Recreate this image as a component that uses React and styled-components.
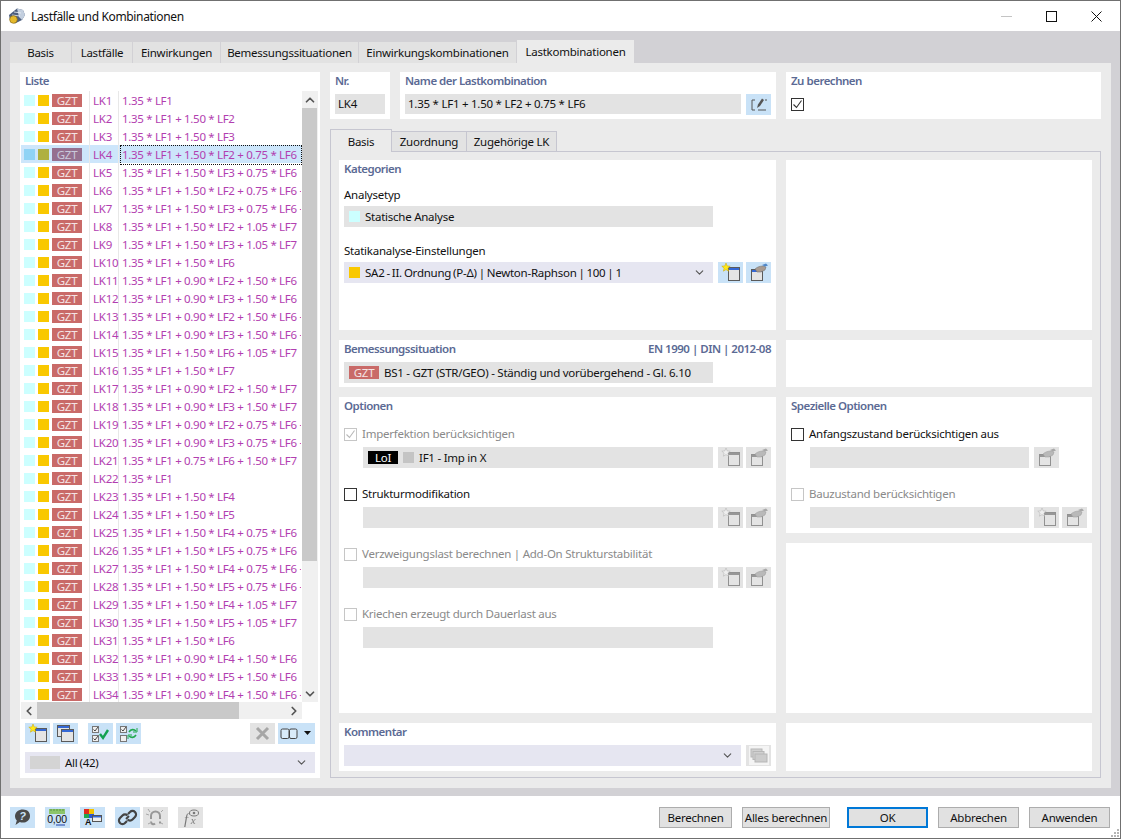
import React from "react";
import styled, { createGlobalStyle } from "styled-components";
import { ChevronDown, ChevronUp, ChevronLeft, ChevronRight } from "lucide-react";

const GlobalStyle = createGlobalStyle`
  html, body { margin: 0; padding: 0; background: #fff; }
  * { box-sizing: border-box; }
  body { font-family: "Noto Sans", "Open Sans", sans-serif; font-size: 11.5px; color: #111; }
`;

const Win = styled.div`
  width: 1121px;
  height: 839px;
  border: 1px solid #707070;
  display: flex;
  flex-direction: column;
  background: #fff;
  overflow: hidden;
  letter-spacing: -0.25px;
`;
const TitleBar = styled.div`
  height: 30px;
  flex: none;
  display: flex;
  align-items: center;
  padding-left: 7px;
  gap: 5px;
`;
const TitleText = styled.span`
  flex: 1;
  font-size: 12px;
  letter-spacing: -0.35px;
`;
const WinButtons = styled.div`
  display: flex;
  align-items: center;
  margin-right: 18px;
  gap: 34px;
`;
const Band = styled.div`
  flex: none;
  height: 765px;
  background: #d2d1d5;
  padding: 9px 9px 8px;
`;
const TopTabs = styled.div`
  height: 23px;
  display: flex;
  align-items: flex-end;
  gap: 1px;
`;
const TopTab = styled.div`
  width: ${(p) => p.$w}px;
  height: ${(p) => (p.$active ? 23 : 21)}px;
  background: ${(p) => (p.$active ? "#ebebeb" : "#e2e2e2")};
  display: flex;
  align-items: center;
  justify-content: center;
`;
const Sheet = styled.div`
  height: 725px;
  background: #ebebeb;
  padding: 9px 10px 10px;
  display: grid;
  grid-template-columns: 300px 771px;
  gap: 10px;
`;
const ListPanel = styled.div`
  background: #fff;
  display: flex;
  flex-direction: column;
`;
const Heading = styled.div`
  height: 16px;
  line-height: 16px;
  font-weight: 600;
  color: #5b6a94;
  letter-spacing: -0.5px;
  display: flex;
  justify-content: space-between;
`;
const ListHeading = styled(Heading)`
  margin: 1px 0 2px 5px;
`;
const ListWrap = styled.div`
  margin: 0 1px;
  height: 611px;
  display: flex;
  overflow: hidden;
`;
const Rows = styled.div`
  width: 281px;
  flex: none;
  overflow: hidden;
`;
const Row = styled.div`
  height: 18px;
  display: grid;
  grid-template-columns: 69px 29px 1fr;
  align-items: stretch;
  background: ${(p) => (p.$sel ? "#cde6fb" : "transparent")};
`;
const Marks = styled.div`
  display: flex;
  align-items: center;
  padding: 0 0 1px 3px;
  gap: 3px;
  border-right: 1px solid #e8e8e8;
`;
const Swatch = styled.span`
  width: 11px;
  height: 11px;
  flex: none;
  background: ${(p) => p.$c};
`;
const Gzt = styled.span`
  width: 30px;
  height: 13px;
  flex: none;
  background: ${(p) => p.$c || "#c96a68"};
  color: ${(p) => (p.$sel ? "#c9c9dc" : "#f4e4e4")};
  display: flex;
  align-items: center;
  justify-content: center;
`;
const Code = styled.span`
  color: #b23eb0;
  padding-left: 3px;
  line-height: 20px;
  border-right: 1px solid #e8e8e8;
  white-space: nowrap;
`;
const Formula = styled.span`
  color: #b23eb0;
  padding-left: 1px;
  line-height: 18px;
  letter-spacing: -0.32px;
  white-space: nowrap;
  overflow: hidden;
  border: 1px ${(p) => (p.$sel ? "dotted #111" : "solid transparent")};
  margin-left: 1px;
`;
const VBar = styled.div`
  width: 16px;
  flex: none;
  background: #f0f0f0;
  display: flex;
  flex-direction: column;
`;
const Arrow = styled.div`
  width: 16px;
  height: 17px;
  flex: none;
  display: flex;
  align-items: center;
  justify-content: center;
  color: #555;
`;
const VThumb = styled.div`
  width: 15px;
  height: 453px;
  background: #c9c9c9;
`;
const Spring = styled.div`
  flex: 1;
`;
const HBar = styled.div`
  margin-left: 1px;
  width: 281px;
  height: 17px;
  flex: none;
  background: #f0f0f0;
  display: flex;
  align-items: center;
`;
const HThumb = styled.div`
  width: 202px;
  height: 17px;
  background: #c9c9c9;
`;
const ListTools = styled.div`
  margin: 4px 5px 0;
  height: 21px;
  display: flex;
  gap: 3px;
`;
const Pad = styled.div`
  width: ${(p) => p.$w}px;
  flex: none;
`;
const IconBtn = styled.div`
  width: ${(p) => p.$w || 25}px;
  height: 21px;
  flex: none;
  background: ${(p) => (p.$off ? "#e3e3e3" : "#c9e2f7")};
  display: flex;
  align-items: center;
  justify-content: center;
  svg { filter: ${(p) => (p.$off ? "grayscale(1) opacity(0.6)" : "none")}; }
`;
const Combo = styled.div`
  width: ${(p) => p.$w}px;
  height: 21px;
  flex: none;
  background: #e6e6f1;
  display: flex;
  align-items: center;
  padding: 0 7px 1px 5px;
  gap: 5px;
  color: #111;
  word-spacing: -0.8px;
`;
const ListCombo = styled(Combo)`
  margin: 8px 5px 0;
`;
const Fill = styled.span`
  flex: 1;
  white-space: nowrap;
`;
const AllSwatch = styled.span`
  width: 30px;
  height: 13px;
  background: #d4d4d4;
`;
const Right = styled.div`
  display: flex;
  flex-direction: column;
  min-width: 0;
`;
const HeadRow = styled.div`
  height: 47px;
  display: grid;
  grid-template-columns: 60px 376px 315px;
  gap: 10px;
`;
const HeadBox = styled.div`
  background: #fff;
  padding: 1px 5px 0;
`;
const FieldRow = styled.div`
  display: flex;
  gap: 5px;
  margin-top: ${(p) => p.$top ?? 5}px;
  margin-left: ${(p) => p.$indent || 0}px;
`;
const Field = styled.div`
  width: ${(p) => p.$w}px;
  height: ${(p) => p.$h || 21}px;
  flex: none;
  background: #e3e3e3;
  display: flex;
  align-items: center;
  padding: 0 0 1px ${(p) => p.$pad ?? 5}px;
  gap: 5px;
  white-space: nowrap;
`;
const Tools = styled.div`
  display: flex;
  gap: 3px;
`;
const SubTabs = styled.div`
  margin-top: 10px;
  height: 23px;
  display: flex;
  align-items: flex-end;
  position: relative;
  z-index: 1;
  margin-bottom: -1px;
`;
const SubTab = styled.div`
  width: ${(p) => p.$w}px;
  height: ${(p) => (p.$active ? 23 : 21)}px;
  background: ${(p) => (p.$active ? "#ebebeb" : "#e3e3e3")};
  border: 1px solid #c6c6d0;
  border-bottom: ${(p) => (p.$active ? "none" : "1px solid #c6c6d0")};
  margin-left: ${(p) => (p.$first ? 0 : -1)}px;
  display: flex;
  align-items: center;
  justify-content: center;
`;
const SubSheet = styled.div`
  flex: 1;
  border: 1px solid #c6c6d0;
  padding: 8px 8px 6px;
  display: grid;
  grid-template-columns: 437px 306px;
  grid-template-rows: 170px 47px 316px 48px;
  gap: 10px;
`;
const Section = styled.div`
  background: #fff;
  padding: 1px 5px 0;
`;
const Stack = styled.div`
  display: flex;
  flex-direction: column;
  gap: 10px;
  min-height: 0;
`;
const StackSection = styled(Section)`
  flex: ${(p) => (p.$h ? `0 0 ${p.$h}px` : 1)};
`;
const Label = styled.div`
  height: 16px;
  line-height: 16px;
  margin-top: ${(p) => p.$top}px;
`;
const CheckRow = styled.div`
  height: 16px;
  margin-top: ${(p) => p.$top}px;
  display: flex;
  align-items: center;
  gap: 5px;
  color: ${(p) => (p.$off ? "#8a8a8a" : "#111")};
  white-space: nowrap;
  line-height: 14px;
`;
const Box = styled.span`
  width: 13px;
  height: 13px;
  flex: none;
  background: #fff;
  border: 1px solid ${(p) => (p.$off ? "#c6c6c6" : "#333")};
  display: flex;
  align-items: center;
  justify-content: center;
`;
const LoI = styled.span`
  width: 30px;
  height: 13px;
  background: #000;
  color: #fff;
  display: flex;
  align-items: center;
  justify-content: center;
`;
const Footer = styled.div`
  flex: 1;
  display: flex;
  align-items: center;
  padding: 0 10px 0 9px;
  position: relative;
`;
const FooterIcons = styled.div`
  display: flex;
  flex: 1;
`;
const Gap = styled.span`
  width: ${(p) => p.$w}px;
  flex: none;
`;
const DlgBtn = styled.div`
  width: ${(p) => p.$w}px;
  height: 21px;
  margin-left: ${(p) => p.$left}px;
  padding-top: 1px;
  background: #e1e1e1;
  border: ${(p) => (p.$main ? "2px solid #0078d7" : "1px solid #adadad")};
  display: flex;
  align-items: center;
  justify-content: center;
  white-space: nowrap;
`;
const Grip = styled.svg`
  position: absolute;
  right: 0;
  bottom: 0;
`;

const Ic = ({ children, w = 25 }) => (
  <svg width={w} height="21" viewBox={`0 0 ${w} 21`}>{children}</svg>
);
const Frame = ({ x, y, w = 11, h = 13 }) => (
  <g>
    <rect x={x + 0.5} y={y + 0.5} width={w} height={h} fill="#e4e4e4" stroke="#5a5a5a" />
    <rect x={x + 1} y={y + 1} width={w - 1} height="2" fill="#3568d4" />
  </g>
);
const Star = ({ off }) => (
  <polygon
    points="8,1 9.200,3.900 12.200,4.200 9.900,6.200 10.600,9.200 8,7.600 5.400,9.200 6.100,6.200 3.800,4.200 6.800,3.900"
    fill={off ? "#f6f6f6" : "#ffe81a"}
    stroke={off ? "#8a8a8a" : "#c8a400"}
    strokeWidth="0.5"
  />
);
const NewIcon = ({ off }) => <Ic><Frame x={10} y={5} /><Star off={off} /></Ic>;
const CopyIcon = () => <Ic><Frame x={4} y={2} w={12} h={11} /><Frame x={8} y={6} w={12} h={12} /></Ic>;
const MiniCheck = ({ x, y, on = true }) => (
  <g>
    <rect x={x + 0.5} y={y + 0.5} width="6" height="6" fill="#eee" stroke="#777" />
    {on && <path d={`M${x + 1.500} ${y + 3.500}l1.500 1.500 3-4`} fill="none" stroke="#333" strokeWidth="0.9" />}
  </g>
);
const CheckAllIcon = () => (
  <Ic>
    <MiniCheck x={4} y={3} /><MiniCheck x={4} y={12} />
    <path d="M12 11l3 4 5-8" fill="none" stroke="#12a150" strokeWidth="2.400" />
  </Ic>
);
const CheckSwapIcon = () => (
  <Ic>
    <MiniCheck x={4} y={3} /><MiniCheck x={4} y={12} on={false} />
    <path d="M13 9c2-3 5-3 7-1M20 12c-2 3-5 3-7 1" fill="none" stroke="#22a84f" strokeWidth="1.600" />
    <path d="M21 5v4h-4M12 16v-4h4" fill="none" stroke="#22a84f" strokeWidth="1" />
  </Ic>
);
const XIcon = () => (
  <Ic><path d="M7 5l11 11M18 5L7 16" stroke="#7d7d7d" strokeWidth="3" fill="none" /></Ic>
);
const SplitIcon = () => (
  <Ic w={37}>
    <rect x="3" y="6" width="8" height="9.500" rx="1.500" fill="#fff" fillOpacity="0.3" stroke="#444" />
    <rect x="11.500" y="6" width="7.500" height="9.500" rx="1.500" fill="#fff" fillOpacity="0.3" stroke="#444" />
    <path d="M26 8h7l-3.500 4z" fill="#111" />
  </Ic>
);
const EditIcon = () => (
  <Ic>
    <path d="M9 6H6v10h3M12 16h8" fill="none" stroke="#555" strokeWidth="1" />
    <path d="M11 14l1-3.500 4-6 2 1.500-4 6z" fill="#555" />
    <path d="M19 6h2" stroke="#555" strokeWidth="1" />
  </Ic>
);
const HandIcon = () => (
  <Ic>
    <Frame x={5} y={7} w={11} h={11} />
    <path d="M9 7c2-2 5-3 8-3l3 1-1 3-4 2h-4z" fill="#a89a90" stroke="#6a6a6a" strokeWidth="0.5" />
    <path d="M16 3l4-1.500 2 2-3 1z" fill="#4f87c9" />
  </Ic>
);
const HelpIcon = () => (
  <Ic>
    <path d="M13 2.500c4.400 0 7 2.800 7 6.400 0 4-3.200 6.600-7.200 6.600-1.200 0-2 0-3-.5L5.500 18l1.300-4.500C5.600 12.300 5 10.800 5 9c0-3.800 3.600-6.500 8-6.500z" fill="#4a4a4a" />
    <text x="12.500" y="13" fontSize="11" fontWeight="700" fontStyle="italic" textAnchor="middle" fill="#c9e2f7" fontFamily="Liberation Sans, sans-serif">?</text>
  </Ic>
);
const RulerIcon = () => (
  <Ic>
    <rect x="4" y="2" width="16" height="5" fill="#8cc56a" />
    <path d="M6 2v2M9 2v2M12 2v2M15 2v2M18 2v2" stroke="#4f8a3a" strokeWidth="0.8" />
    <text x="12" y="16" fontSize="10.500" textAnchor="middle" fill="#111" fontFamily="Liberation Sans, sans-serif">0,00</text>
    <path d="M11 18h9" stroke="#1c3fa8" strokeWidth="1" />
  </Ic>
);
const ColorsIcon = () => (
  <Ic>
    <rect x="4" y="2" width="5" height="5" fill="#e22b1e" />
    <rect x="9" y="2" width="5" height="5" fill="#f2c200" />
    <rect x="4" y="7" width="5" height="4" fill="#22a84f" />
    <rect x="9" y="7" width="5" height="4" fill="#2b55d8" />
    <text x="8" y="18" fontSize="9" fontWeight="700" textAnchor="middle" fill="#111" fontFamily="Liberation Sans, sans-serif">A</text>
    <rect x="12.500" y="8.500" width="9" height="6" fill="#eee" stroke="#555" />
    <rect x="13" y="9" width="8" height="1.500" fill="#3568d4" />
  </Ic>
);
const LinkIcon = () => (
  <Ic>
    <path d="M11 12l3-3" stroke="#444" strokeWidth="2" />
    <path d="M13 7l2-2a3.500 3.500 0 0 1 5 5l-2.500 2.500a3.500 3.500 0 0 1-5 0M12 14l-2 2a3.500 3.500 0 0 1-5-5l2.500-2.500a3.500 3.500 0 0 1 5 0" fill="none" stroke="#444" strokeWidth="2.200" />
  </Ic>
);
const UnlinkIcon = () => (
  <Ic>
    <path d="M8 12V9a4.500 4.500 0 0 1 9 0v3M8 14.500c0 2.500 2.500 3.500 4 2M17 14.500v2" fill="none" stroke="#666" strokeWidth="2" />
    <path d="M5 2l2 3M3 7l3 1M20 3l-2 2M5 17l2-1M20 17l-2-1" stroke="#666" strokeWidth="0.8" />
  </Ic>
);
const FxIcon = () => (
  <Ic>
    <text x="8" y="17" fontSize="15" fontStyle="italic" textAnchor="middle" fill="#333" fontFamily="Liberation Serif, serif">f</text>
    <text x="15" y="17" fontSize="11" fontStyle="italic" textAnchor="middle" fill="#333" fontFamily="Liberation Serif, serif">x</text>
    <ellipse cx="16" cy="6" rx="4.500" ry="3" fill="none" stroke="#333" />
    <circle cx="16" cy="6" r="1.300" fill="#333" />
  </Ic>
);
const StackIcon = () => (
  <Ic>
    <rect x="3" y="1" width="20" height="19" fill="#fff" />
    <rect x="5" y="4" width="11" height="8" fill="#c4c4c4" stroke="#9a9a9a" />
    <rect x="7" y="6.500" width="11" height="8" fill="#c4c4c4" stroke="#9a9a9a" />
    <rect x="9" y="9" width="12" height="8" fill="#bdbdbd" stroke="#999" />
  </Ic>
);
const Tick = ({ c = "#333" }) => (
  <svg width="11" height="11" viewBox="0 0 11 11"><path d="M1.500 5.500l3 3 5-7" fill="none" stroke={c} strokeWidth="1.100" /></svg>
);
const AppIcon = () => (
  <svg width="18" height="18" viewBox="0 0 18 18">
    <path d="M1 8l8-6.500 6 1.500 2 5-3 5-7 3.500-5-3z" fill="#4e5f7e" />
    <path d="M9 1.500l6 1.500 2 5-3 5-3-3z" fill="#c3cfdf" />
    <path d="M6 5l7 1M4 8l8 1" stroke="#eef2f7" strokeWidth="0.800" />
    <circle cx="5.500" cy="12.500" r="3.800" fill="#e4b92c" stroke="#8d6c10" strokeWidth="0.700" />
  </svg>
);

const p = (a) => a.join(" + ");
const F = "1.35 * LF1";
const more = " + 0.75 * LF8";
const LIST = [
  [F], [F, "1.50 * LF2"], [F, "1.50 * LF3"], [F, "1.50 * LF2", "0.75 * LF6"],
  [F, "1.50 * LF3", "0.75 * LF6"], [F, "1.50 * LF2", "0.75 * LF6", 1], [F, "1.50 * LF3", "0.75 * LF6", 1],
  [F, "1.50 * LF2", "1.05 * LF7"], [F, "1.50 * LF3", "1.05 * LF7"], [F, "1.50 * LF6"],
  [F, "0.90 * LF2", "1.50 * LF6"], [F, "0.90 * LF3", "1.50 * LF6"], [F, "0.90 * LF2", "1.50 * LF6", 1],
  [F, "0.90 * LF3", "1.50 * LF6", 1], [F, "1.50 * LF6", "1.05 * LF7"], [F, "1.50 * LF7"],
  [F, "0.90 * LF2", "1.50 * LF7"], [F, "0.90 * LF3", "1.50 * LF7"], [F, "0.90 * LF2", "0.75 * LF6", 1],
  [F, "0.90 * LF3", "0.75 * LF6", 1], [F, "0.75 * LF6", "1.50 * LF7"], [F], [F, "1.50 * LF4"], [F, "1.50 * LF5"],
  [F, "1.50 * LF4", "0.75 * LF6"], [F, "1.50 * LF5", "0.75 * LF6"], [F, "1.50 * LF4", "0.75 * LF6", 1],
  [F, "1.50 * LF5", "0.75 * LF6", 1], [F, "1.50 * LF4", "1.05 * LF7"], [F, "1.50 * LF5", "1.05 * LF7"],
  [F, "1.50 * LF6"], [F, "0.90 * LF4", "1.50 * LF6"], [F, "0.90 * LF5", "1.50 * LF6"], [F, "0.90 * LF4", "1.50 * LF6", 1],
];

const TOP_TABS = [
  ["Basis", 61], ["Lastfälle", 60], ["Einwirkungen", 87], ["Bemessungssituationen", 137],
  ["Einwirkungskombinationen", 157], ["Lastkombinationen", 117, true],
];

function ListRow({ parts, index }) {
  const sel = index === 3;
  const cut = parts[parts.length - 1] === 1;
  const text = p(cut ? parts.slice(0, -1) : parts) + (cut ? more : "");
  return (
    <Row $sel={sel}>
      <Marks>
        <Swatch $c={sel ? "#8fd3f5" : "#ccffff"} />
        <Swatch $c={sel ? "#afb040" : "#f9c800"} />
        <Gzt $sel={sel} $c={sel ? "#957090" : undefined}>GZT</Gzt>
      </Marks>
      <Code>LK{index + 1}</Code>
      <Formula $sel={sel}>{text}</Formula>
    </Row>
  );
}

const NewHand = ({ off }) => (
  <Tools>
    <IconBtn $off={off}><NewIcon off={off} /></IconBtn>
    <IconBtn $off={off}><HandIcon /></IconBtn>
  </Tools>
);

export default function App() {
  return (
    <Win>
      <GlobalStyle />
      <TitleBar>
        <AppIcon />
        <TitleText>Lastfälle und Kombinationen</TitleText>
        <WinButtons>
          <svg width="11" height="11" viewBox="0 0 11 11"><path d="M0 5.500h11" stroke="#c4c4c4" /></svg>
          <svg width="11" height="11" viewBox="0 0 11 11"><rect x="0.500" y="0.500" width="10" height="10" fill="none" stroke="#111" /></svg>
          <svg width="11" height="11" viewBox="0 0 11 11"><path d="M0.500 0.500l10 10M10.500 0.500l-10 10" stroke="#111" /></svg>
        </WinButtons>
      </TitleBar>
      <Band>
        <TopTabs>
          {TOP_TABS.map(([name, w, active]) => (
            <TopTab key={name} $w={w} $active={active}>{name}</TopTab>
          ))}
        </TopTabs>
        <Sheet>
          <ListPanel>
            <ListHeading>Liste</ListHeading>
            <ListWrap>
              <Rows>
                {LIST.map((parts, i) => <ListRow key={i} parts={parts} index={i} />)}
              </Rows>
              <VBar>
                <Arrow><ChevronUp size={14} strokeWidth={3} /></Arrow>
                <VThumb />
                <Spring />
                <Arrow><ChevronDown size={14} strokeWidth={3} /></Arrow>
              </VBar>
            </ListWrap>
            <HBar>
              <Arrow><ChevronLeft size={14} strokeWidth={3} /></Arrow>
              <HThumb />
              <Spring />
              <Arrow><ChevronRight size={14} strokeWidth={3} /></Arrow>
            </HBar>
            <ListTools>
              <IconBtn><NewIcon /></IconBtn>
              <IconBtn><CopyIcon /></IconBtn>
              <Pad $w={4} />
              <IconBtn><CheckAllIcon /></IconBtn>
              <IconBtn><CheckSwapIcon /></IconBtn>
              <Pad $w={103} />
              <IconBtn $off><XIcon /></IconBtn>
              <IconBtn $w={37}><SplitIcon /></IconBtn>
            </ListTools>
            <ListCombo $w={290}>
              <AllSwatch />
              <Fill>All (42)</Fill>
              <ChevronDown size={13} color="#555" />
            </ListCombo>
          </ListPanel>

          <Right>
            <HeadRow>
              <HeadBox>
                <Heading>Nr.</Heading>
                <FieldRow><Field $w={50} $h={20} $pad={3}>LK4</Field></FieldRow>
              </HeadBox>
              <HeadBox>
                <Heading>Name der Lastkombination</Heading>
                <FieldRow>
                  <Field $w={336} $h={20} $pad={3}>1.35 * LF1 + 1.50 * LF2 + 0.75 * LF6</Field>
                  <IconBtn><EditIcon /></IconBtn>
                </FieldRow>
              </HeadBox>
              <HeadBox>
                <Heading>Zu berechnen</Heading>
                <FieldRow $top={9}><Box><Tick /></Box></FieldRow>
              </HeadBox>
            </HeadRow>

            <SubTabs>
              <SubTab $w={62} $active $first>Basis</SubTab>
              <SubTab $w={76}>Zuordnung</SubTab>
              <SubTab $w={91}>Zugehörige LK</SubTab>
            </SubTabs>
            <SubSheet>
              <Section>
                <Heading>Kategorien</Heading>
                <Label $top={10}>Analysetyp</Label>
                <FieldRow $top={3}>
                  <Field $w={369}><Swatch $c="#ccffff" />Statische Analyse</Field>
                </FieldRow>
                <Label $top={16}>Statikanalyse-Einstellungen</Label>
                <FieldRow $top={3}>
                  <Combo $w={369}>
                    <Swatch $c="#f9c800" />
                    <Fill>SA2 - II. Ordnung (P-Δ) | Newton-Raphson | 100 | 1</Fill>
                    <ChevronDown size={13} color="#555" />
                  </Combo>
                  <NewHand />
                </FieldRow>
              </Section>
              <Section />
              <Section>
                <Heading>
                  <span>Bemessungssituation</span>
                  <span>EN 1990 | DIN | 2012-08</span>
                </Heading>
                <FieldRow>
                  <Field $w={369}><Gzt>GZT</Gzt>BS1 - GZT (STR/GEO) - Ständig und vorübergehend - Gl. 6.10</Field>
                </FieldRow>
              </Section>
              <Section />
              <Section>
                <Heading>Optionen</Heading>
                <CheckRow $top={12} $off><Box $off><Tick c="#b8b8b8" /></Box>Imperfektion berücksichtigen</CheckRow>
                <FieldRow $indent={19}>
                  <Field $w={350}><LoI>LoI</LoI><Swatch $c="#c4c4c4" />IF1 - Imp in X</Field>
                  <NewHand off />
                </FieldRow>
                <CheckRow $top={18}><Box />Strukturmodifikation</CheckRow>
                <FieldRow $indent={19}>
                  <Field $w={350} />
                  <NewHand off />
                </FieldRow>
                <CheckRow $top={18} $off><Box $off />Verzweigungslast berechnen | Add-On Strukturstabilität</CheckRow>
                <FieldRow $indent={19}>
                  <Field $w={350} />
                  <NewHand off />
                </FieldRow>
                <CheckRow $top={18} $off><Box $off />Kriechen erzeugt durch Dauerlast aus</CheckRow>
                <FieldRow $indent={19}><Field $w={350} /></FieldRow>
              </Section>
              <Stack>
                <StackSection $h={136}>
                  <Heading>Spezielle Optionen</Heading>
                  <CheckRow $top={12}><Box />Anfangszustand berücksichtigen aus</CheckRow>
                  <FieldRow $indent={19}>
                    <Field $w={219} />
                    <IconBtn $off><HandIcon /></IconBtn>
                  </FieldRow>
                  <CheckRow $top={18} $off><Box $off />Bauzustand berücksichtigen</CheckRow>
                  <FieldRow $indent={19}>
                    <Field $w={219} />
                    <NewHand off />
                  </FieldRow>
                </StackSection>
                <StackSection />
              </Stack>
              <Section>
                <Heading>Kommentar</Heading>
                <FieldRow>
                  <Combo $w={397}>
                    <Fill />
                    <ChevronDown size={13} color="#555" />
                  </Combo>
                  <IconBtn $off><StackIcon /></IconBtn>
                </FieldRow>
              </Section>
              <Section />
            </SubSheet>
          </Right>
        </Sheet>
      </Band>
      <Footer>
        <FooterIcons>
          <IconBtn><HelpIcon /></IconBtn>
          <Gap $w={10} />
          <IconBtn><RulerIcon /></IconBtn>
          <Gap $w={10} />
          <IconBtn><ColorsIcon /></IconBtn>
          <Gap $w={10} />
          <IconBtn><LinkIcon /></IconBtn>
          <Gap $w={3} />
          <IconBtn $off><UnlinkIcon /></IconBtn>
          <Gap $w={10} />
          <IconBtn $off><FxIcon /></IconBtn>
        </FooterIcons>
        <DlgBtn $w={73} $left={0}>Berechnen</DlgBtn>
        <DlgBtn $w={88} $left={10}>Alles berechnen</DlgBtn>
        <DlgBtn $w={81} $left={17} $main>OK</DlgBtn>
        <DlgBtn $w={81} $left={10}>Abbrechen</DlgBtn>
        <DlgBtn $w={81} $left={10}>Anwenden</DlgBtn>
        <Grip width="10" height="10" viewBox="0 0 10 10">
          <path d="M7 1h2v2H7zM4 4h2v2H4zM7 4h2v2H7zM1 7h2v2H1zM4 7h2v2H4zM7 7h2v2H7z" fill="#b5b5b5" />
        </Grip>
      </Footer>
    </Win>
  );
}
